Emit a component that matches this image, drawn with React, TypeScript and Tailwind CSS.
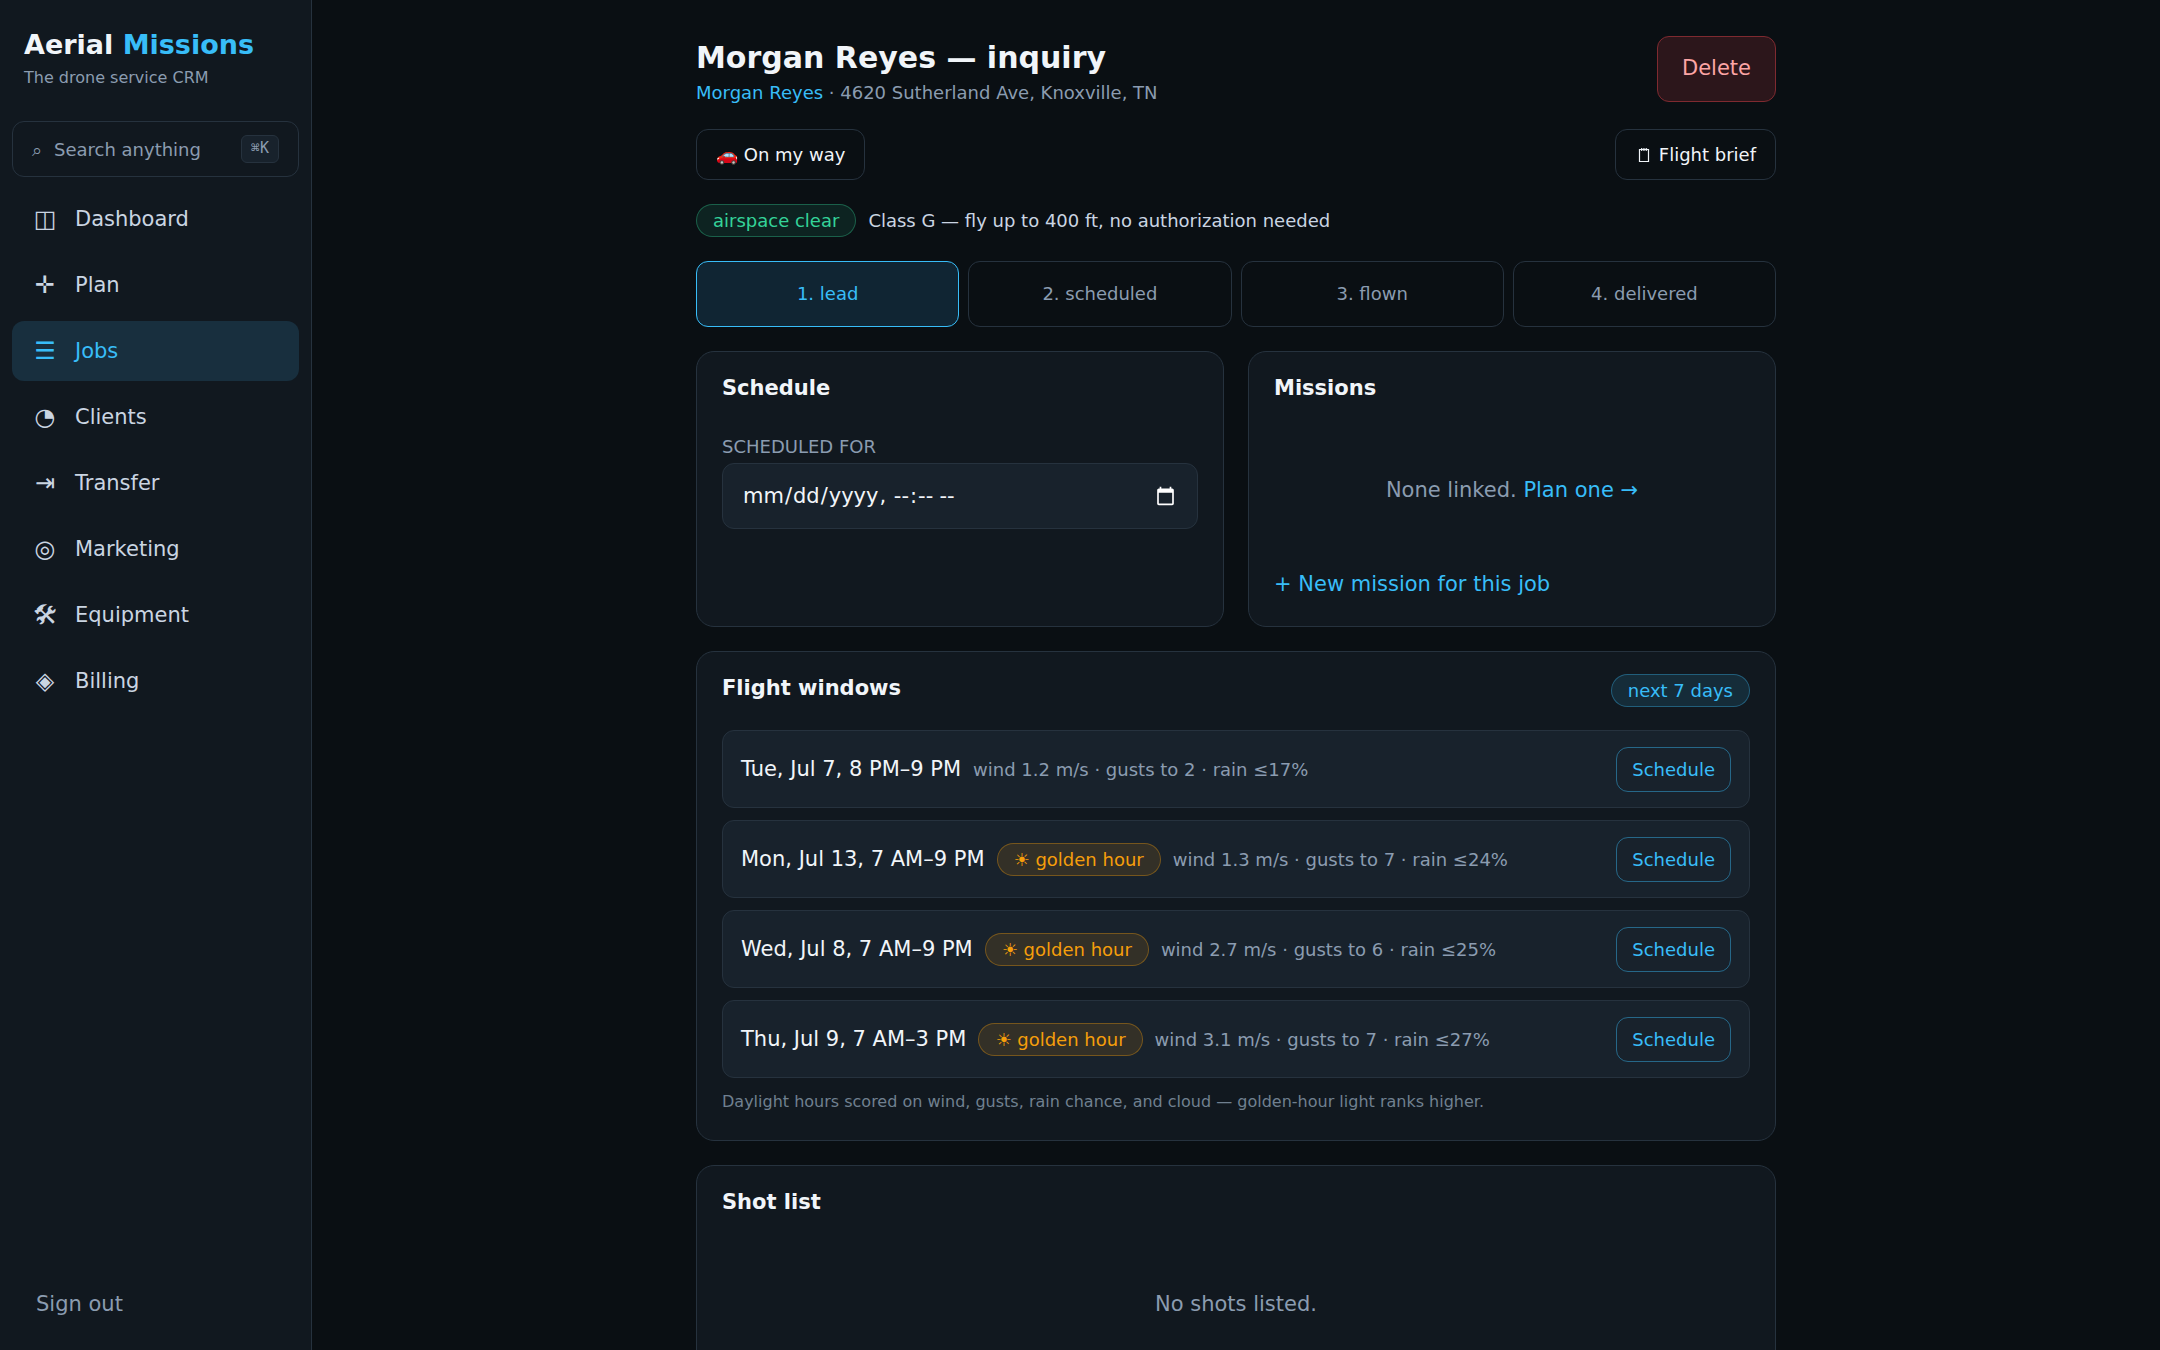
import { useState, type ReactNode } from 'react';
import clsx from 'clsx';

interface FlightWindow {
  time: string;
  golden: boolean;
  conditions: string;
}

const NAV_ITEMS = [
  { icon: '◫', label: 'Dashboard' },
  { icon: '✛', label: 'Plan' },
  { icon: '☰', label: 'Jobs' },
  { icon: '◔', label: 'Clients' },
  { icon: '⇥', label: 'Transfer' },
  { icon: '◎', label: 'Marketing' },
  { icon: '🛠', label: 'Equipment' },
  { icon: '◈', label: 'Billing' },
];

const STEPS = ['lead', 'scheduled', 'flown', 'delivered'];

const FLIGHT_WINDOWS: FlightWindow[] = [
  { time: 'Tue, Jul 7, 8 PM–9 PM', golden: false, conditions: 'wind 1.2 m/s · gusts to 2 · rain ≤17%' },
  { time: 'Mon, Jul 13, 7 AM–9 PM', golden: true, conditions: 'wind 1.3 m/s · gusts to 7 · rain ≤24%' },
  { time: 'Wed, Jul 8, 7 AM–9 PM', golden: true, conditions: 'wind 2.7 m/s · gusts to 6 · rain ≤25%' },
  { time: 'Thu, Jul 9, 7 AM–3 PM', golden: true, conditions: 'wind 3.1 m/s · gusts to 7 · rain ≤27%' },
];

const PILL_TONES = {
  green: 'border-[#34d399]/35 bg-[#34d399]/10 text-[#34d399]',
  blue: 'border-[#38bdf8]/35 bg-[#38bdf8]/12 text-[#38bdf8]',
  amber: 'border-[#f59e0b]/35 bg-[#f59e0b]/12 text-[#f59e0b]',
};

function Pill({ tone, children }: { tone: keyof typeof PILL_TONES; children: ReactNode }) {
  return (
    <span className={clsx('whitespace-nowrap rounded-full border px-4 py-[5px] text-[18px] leading-[21px]', PILL_TONES[tone])}>
      {children}
    </span>
  );
}

function Card({ title, badge, children }: { title: string; badge?: ReactNode; children: ReactNode }) {
  return (
    <section className="rounded-[18px] border border-[#26323e] bg-[#11181f] px-[25px] py-6">
      <div className="mb-[26px] flex h-7 items-start justify-between">
        <h2 className="font-bold text-slate-100">{title}</h2>
        {badge && <div className="flex self-center">{badge}</div>}
      </div>
      {children}
    </section>
  );
}

function NotepadIcon() {
  return (
    <svg viewBox="0 0 18 18" className="h-[18px] w-[18px]" fill="none" stroke="currentColor" aria-hidden="true">
      <path d="M4.5 3.5h9v12h-9z" strokeWidth="1.2" />
      <path d="M6.5 2v3M8.2 2v3M9.9 2v3M11.6 2v3" strokeWidth="0.9" />
    </svg>
  );
}

function Sidebar() {
  const [active, setActive] = useState('Jobs');

  return (
    <aside className="flex w-[312px] shrink-0 flex-col border-r border-[#26323e] bg-[#11181f] px-3 pt-7 pb-4">
      <div className="px-3">
        <div className="text-[27px] leading-[33px] font-bold text-slate-100">
          Aerial <span className="text-[#38bdf8]">Missions</span>
        </div>
        <p className="mt-1 text-[16px] leading-[26px] text-[#8b9cb0]">The drone service CRM</p>
      </div>

      <button
        type="button"
        className="mt-[30px] flex h-[56px] items-center gap-3 rounded-xl border border-[#26323e] px-[19px] text-[18px] leading-[21px] text-[#8b9cb0]"
      >
        <span>⌕</span>
        <span className="flex-1 text-left">Search anything</span>
        <kbd className="h-7 rounded-md border border-[#26323e] bg-[#18222c] px-[9px] font-['DejaVu_Sans_Mono',monospace] text-[15px] leading-6">
          ⌘K
        </kbd>
      </button>

      <nav className="mt-3 flex flex-col gap-[6px]">
        {NAV_ITEMS.map(({ icon, label }) => (
          <a
            key={label}
            href="#"
            onClick={() => setActive(label)}
            className={clsx(
              'flex h-[60px] items-center gap-[15px] rounded-xl px-[18px] pb-px',
              active === label ? 'bg-[#182f3e] text-[#38bdf8]' : 'text-slate-300',
            )}
          >
            <span className="w-[30px] text-center font-['DejaVu_Sans','Noto_Sans_Symbols_2',sans-serif] text-[24px] leading-7">
              {icon}
            </span>
            <span>{label}</span>
          </a>
        ))}
      </nav>

      <button type="button" className="mt-auto h-[60px] px-6 text-left text-[#8b9cb0]">
        Sign out
      </button>
    </aside>
  );
}

export default function App() {
  const [step, setStep] = useState('lead');
  const [scheduledFor, setScheduledFor] = useState('');

  return (
    <div className="flex h-screen overflow-hidden bg-[#0a0f13] font-['DejaVu_Sans',sans-serif] text-[21px] leading-6 text-slate-100">
      <Sidebar />

      <main className="flex-1 overflow-y-auto px-6 py-9 [scrollbar-width:none]">
        <div className="mx-auto flex max-w-[1080px] flex-col gap-6">
          {/* Header */}
          <header>
            <div className="flex items-start justify-between">
              <div className="pt-1">
                <h1 className="text-[30px] leading-9 font-bold">Morgan Reyes — inquiry</h1>
                <p className="mt-[6px] text-[18px] leading-[21px] text-[#8b9cb0]">
                  <a href="#" className="text-[#38bdf8]">Morgan Reyes</a> · 4620 Sutherland Ave, Knoxville, TN
                </p>
              </div>
              <button
                type="button"
                className="h-[66px] rounded-xl border border-[#7f2a30] bg-[#2c161b] px-6 pb-[2px] text-[#fca5a5]"
              >
                Delete
              </button>
            </div>

            <div className="mt-[26px] flex justify-between text-[18px] leading-[21px]">
              <button type="button" className="h-[51px] rounded-xl border border-[#26323e] px-[19px]">
                🚗 On my way
              </button>
              <button type="button" className="flex h-[51px] items-center gap-[6px] rounded-xl border border-[#26323e] px-[19px]">
                <NotepadIcon />
                Flight brief
              </button>
            </div>
          </header>

          <div className="flex items-center gap-3 text-[18px] leading-[21px] text-slate-300">
            <Pill tone="green">airspace clear</Pill>
            <span>Class G — fly up to 400 ft, no authorization needed</span>
          </div>

          {/* Job progress */}
          <div className="grid grid-cols-4 gap-[9px]">
            {STEPS.map((name, i) => (
              <button
                key={name}
                type="button"
                onClick={() => setStep(name)}
                className={clsx(
                  'h-[66px] rounded-xl border pb-[2px] text-[18px] leading-[21px]',
                  step === name ? 'border-[#38bdf8] bg-[#102533] text-[#38bdf8]' : 'border-[#26323e] text-[#8b9cb0]',
                )}
              >
                {i + 1}. {name}
              </button>
            ))}
          </div>

          <div className="grid grid-cols-2 gap-6">
            <Card title="Schedule">
              <label htmlFor="scheduled-for" className="block pt-[6px] text-[18px] leading-[21px] text-[#8b9cb0] uppercase">
                Scheduled for
              </label>
              <input
                id="scheduled-for"
                type="datetime-local"
                value={scheduledFor}
                onChange={(e) => setScheduledFor(e.target.value)}
                className="mt-[6px] h-[66px] w-full rounded-xl border border-[#26323e] bg-[#18222c] px-[19px] text-slate-100 [color-scheme:dark]"
              />
            </Card>

            <Card title="Missions">
              <p className="py-12 text-center text-[#8b9cb0]">
                None linked. <a href="#" className="text-[#38bdf8]">Plan one →</a>
              </p>
              <a href="#" className="mt-4 block py-[6px] text-[#38bdf8]">+ New mission for this job</a>
            </Card>
          </div>

          <Card title="Flight windows" badge={<Pill tone="blue">next 7 days</Pill>}>
            <ul className="flex flex-col gap-3">
              {FLIGHT_WINDOWS.map((win) => (
                <li
                  key={win.time}
                  className="flex h-[78px] items-center justify-between rounded-xl border border-[#26323e] bg-[#18222c] px-[18px]"
                >
                  <div className="flex items-baseline gap-3">
                    <span>{win.time}</span>
                    {win.golden && <Pill tone="amber">☀ golden hour</Pill>}
                    <span className="text-[18px] leading-[21px] text-[#8b9cb0]">{win.conditions}</span>
                  </div>
                  <button
                    type="button"
                    className="h-[45px] rounded-xl border border-[#38bdf8]/45 px-[15px] text-[18px] leading-[21px] text-[#38bdf8]"
                  >
                    Schedule
                  </button>
                </li>
              ))}
            </ul>
            <p className="mt-3 pb-[2px] text-[16px] leading-6 text-[#708090]">
              Daylight hours scored on wind, gusts, rain chance, and cloud — golden-hour light ranks higher.
            </p>
          </Card>

          <Card title="Shot list">
            <p className="py-12 text-center text-[#8b9cb0]">No shots listed.</p>
          </Card>
        </div>
      </main>
    </div>
  );
}
